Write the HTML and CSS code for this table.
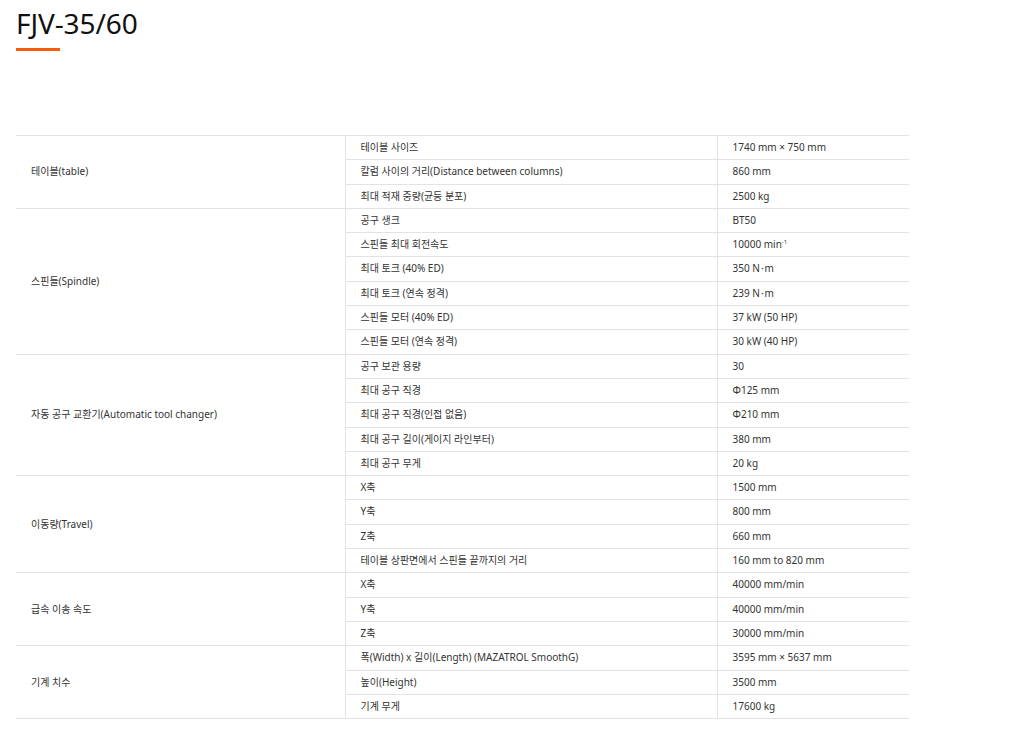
FILE: index.html
```html
<!DOCTYPE html>
<html lang="ko">
<head>
<meta charset="utf-8">
<title>FJV-35/60</title>
<link rel="stylesheet" href="styles.css">
</head>
<body>
<div class="page">
  <h1 class="title">FJV-35/60</h1>
  <div class="title-bar"></div>
  <table class="spec">
    <colgroup><col class="c1"><col class="c2"><col class="c3"></colgroup>
    <tbody class="grp">
      <tr><th rowspan="3">테이블(table)</th><td>테이블 사이즈</td><td>1740 mm × 750 mm</td></tr>
      <tr><td>칼럼 사이의 거리(Distance between columns)</td><td>860 mm</td></tr>
      <tr><td>최대 적재 중량(균등 분포)</td><td>2500 kg</td></tr>
    </tbody>
    <tbody class="grp">
      <tr><th rowspan="6">스핀들(Spindle)</th><td>공구 생크</td><td>BT50</td></tr>
      <tr><td>스핀들 최대 회전속도</td><td>10000 min<sup>-1</sup></td></tr>
      <tr><td>최대 토크 (40% ED)</td><td>350 N<span class="dot">·</span>m</td></tr>
      <tr><td>최대 토크 (연속 정격)</td><td>239 N<span class="dot">·</span>m</td></tr>
      <tr><td>스핀들 모터 (40% ED)</td><td>37 kW (50 HP)</td></tr>
      <tr><td>스핀들 모터 (연속 정격)</td><td>30 kW (40 HP)</td></tr>
    </tbody>
    <tbody class="grp">
      <tr><th rowspan="5">자동 공구 교환기(Automatic tool changer)</th><td>공구 보관 용량</td><td>30</td></tr>
      <tr><td>최대 공구 직경</td><td>Φ125 mm</td></tr>
      <tr><td>최대 공구 직경(인접 없음)</td><td>Φ210 mm</td></tr>
      <tr><td>최대 공구 길이(게이지 라인부터)</td><td>380 mm</td></tr>
      <tr><td>최대 공구 무게</td><td>20 kg</td></tr>
    </tbody>
    <tbody class="grp">
      <tr><th rowspan="4">이동량(Travel)</th><td>X축</td><td>1500 mm</td></tr>
      <tr><td>Y축</td><td>800 mm</td></tr>
      <tr><td>Z축</td><td>660 mm</td></tr>
      <tr><td>테이블 상판면에서 스핀들 끝까지의 거리</td><td>160 mm to 820 mm</td></tr>
    </tbody>
    <tbody class="grp">
      <tr><th rowspan="3">급속 이송 속도</th><td>X축</td><td>40000 mm/min</td></tr>
      <tr><td>Y축</td><td>40000 mm/min</td></tr>
      <tr><td>Z축</td><td>30000 mm/min</td></tr>
    </tbody>
    <tbody class="grp">
      <tr><th rowspan="3">기계 치수</th><td>폭(Width) x 길이(Length) (MAZATROL SmoothG)</td><td>3595 mm × 5637 mm</td></tr>
      <tr><td>높이(Height)</td><td>3500 mm</td></tr>
      <tr><td>기계 무게</td><td>17600 kg</td></tr>
    </tbody>
  </table>
</div>
</body>
</html>
```

FILE: styles.css
```css
* { box-sizing: border-box; }
html, body { margin: 0; padding: 0; background: #fff; }
body {
  font-family: "Noto Sans", "Noto Sans CJK KR", sans-serif;
  color: #333;
}
.page {
  padding: 0 16px;
  width: 925px;
}
.title {
  margin: 0;
  padding-top: 4px;
  font-size: 28px;
  font-weight: 400;
  line-height: 38px;
  color: #111;
  letter-spacing: -0.1px;
}
.title-bar {
  width: 44px;
  height: 3px;
  background: #fa5a0a;
  margin-top: 6px;
}
.spec {
  margin-top: 84px;
  width: 893px;
  border-collapse: collapse;
  table-layout: fixed;
  font-size: 10px;
}
.c1 { width: 329px; }
.c2 { width: 372px; }
.c3 { width: 192px; }
.spec th, .spec td {
  border-top: 1px solid #e3e3e3;
  border-bottom: 1px solid #e3e3e3;
  padding: 4px 15px 5px;
  line-height: 14.3px;
  text-align: left;
  font-weight: 400;
  vertical-align: middle;
  white-space: nowrap;
}
.spec th {
  border-right: 1px solid #e3e3e3;
}
.spec td + td {
  border-left: 1px solid #e3e3e3;
}
.grp { border-top: 1px solid #dedede; }
.spec sup {
  font-size: 6px;
  line-height: 0;
  vertical-align: 4px;
}
.dot {
  margin: 0 1px;
}
```
